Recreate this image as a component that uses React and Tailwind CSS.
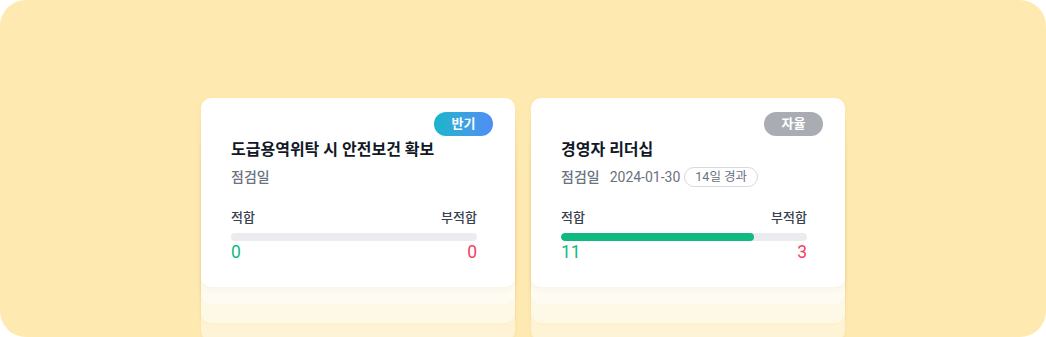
import React from "react";

const cards = [
  {
    id: 1,
    title: "도급용역위탁 시 안전보건 확보",
    badge: "반기",
    badgeClass: "bg-gradient-to-r from-[#15b5c9] to-[#4f8cf7]",
    date: null,
    elapsed: null,
    pass: 0,
    fail: 0,
  },
  {
    id: 2,
    title: "경영자 리더십",
    badge: "자율",
    badgeClass: "bg-[#a9adb3]",
    date: "2024-01-30",
    elapsed: "14일 경과",
    pass: 11,
    fail: 3,
  },
];

function Card({ card }) {
  const total = card.pass + card.fail;
  const pct = total ? (card.pass / total) * 100 : 0;

  return (
    <div className="relative h-[189px] w-[314px]">
      {/* stacked cards behind */}
      <div className="absolute inset-x-0 top-[17px] h-full rounded-[10px] bg-white/45 shadow-[0_1px_3px_rgba(180,140,60,0.1)]" />
      <div className="absolute inset-x-0 top-[36px] h-full rounded-[10px] bg-white/45 shadow-[0_1px_3px_rgba(180,140,60,0.1)]" />
      <div className="absolute inset-x-0 top-[54px] h-full rounded-[10px] bg-white/45 shadow-[0_1px_3px_rgba(180,140,60,0.1)]" />

      <div className="relative z-10 h-[189px] rounded-[10px] bg-white pl-[30px] pr-[38px] pt-10 shadow-[0_2px_6px_rgba(180,140,60,0.08)]">
        <span
          className={`absolute right-[22px] top-[14px] flex h-6 w-[59px] items-center justify-center rounded-full text-[13px] font-bold text-white ${card.badgeClass}`}
        >
          {card.badge}
        </span>

        <h3 className="text-base font-bold leading-6 text-[#111827]">{card.title}</h3>

        <div className="mt-1 flex h-[22px] items-center text-[14px] text-[#6b7280]">
          <span className="font-medium">점검일</span>
          {card.date && <span className="ml-[10px] text-[#6b7280]">{card.date}</span>}
          {card.elapsed && (
            <span className="ml-[4px] flex h-5 items-center rounded-full border border-[#d7d9de] px-[10px] text-[12.5px] text-[#6b7280]">
              {card.elapsed}
            </span>
          )}
        </div>

        <div className="mt-[20px] flex justify-between text-[13px] font-medium leading-5 text-[#374151]">
          <span>적합</span>
          <span>부적합</span>
        </div>

        <div className="mt-[5px] h-2 w-full overflow-hidden rounded-full bg-[#ebecf0]">
          <div className="h-full rounded-full bg-[#10b981]" style={{ width: `${pct}%` }} />
        </div>

        <div className="flex justify-between text-[17.5px] leading-[22px]">
          <span className="text-[#10b981]">{card.pass}</span>
          <span className="text-[#f43f5e]">{card.fail}</span>
        </div>
      </div>
    </div>
  );
}

export default function App() {
  return (
    <div
      className="h-[337px] w-[1046px] bg-white"
      style={{ fontFamily: "Roboto, 'Noto Sans CJK KR', 'Noto Sans', sans-serif" }}
    >
      <div className="flex h-full items-start justify-center gap-4 overflow-hidden rounded-[26px] bg-[#feeab1] pt-[98px]">
        {cards.map((c) => (
          <Card key={c.id} card={c} />
        ))}
      </div>
    </div>
  );
}
